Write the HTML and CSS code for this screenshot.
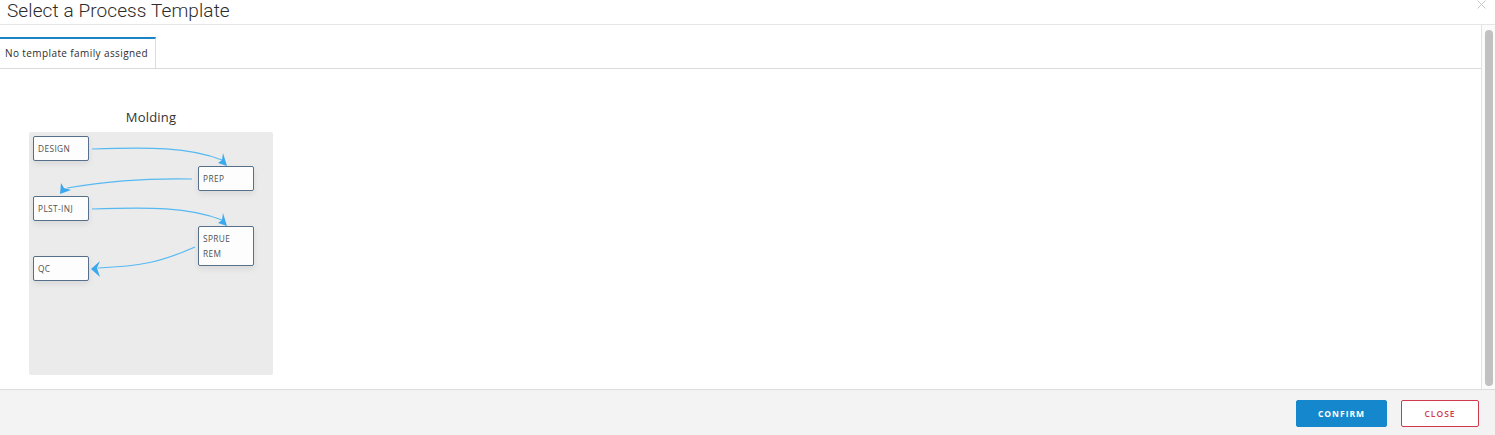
FILE: index.html
```html
<!DOCTYPE html>
<html>
<head>
<meta charset="utf-8">
<link rel="stylesheet" href="styles.css">
</head>
<body>
<div class="dialog">
  <div class="header">
    <div class="title">Select a Process Template</div>
    <div class="close-x">
      <svg width="9" height="9" viewBox="0 0 9 9"><path d="M0.5 0.5 L8.5 8.5 M8.5 0.5 L0.5 8.5" stroke="#c8c8c8" stroke-width="1" fill="none"/></svg>
    </div>
  </div>
  <div class="main">
    <div class="content">
      <div class="tabbar">
        <div class="tab">No template family assigned</div>
      </div>
      <div class="cards">
        <div class="card">
          <div class="card-title">Molding</div>
          <div class="diagram">
            <svg class="arrows" width="244" height="243" viewBox="0 0 244 243">
              <g fill="none" stroke="#56b9f2" stroke-width="1.2">
                <path d="M63 17 C 120 15, 160 15, 193 28"/>
                <path d="M163 47 C 110 46, 75 50, 38 56"/>
                <path d="M63 77 C 120 75, 160 75, 193 88"/>
                <path d="M166 115 C 130 131, 110 134, 69 136"/>
              </g>
              <g fill="#3aa9ee">
                <path d="M198 34 L189 31 L193 28 L194 21 Z"/>
                <path d="M31 62 L32 51 L35 56 L42 58 Z"/>
                <path d="M198 94 L189 91 L193 88 L194 81 Z"/>
                <path d="M62 137 L71 129 L68 136 L71 145 Z"/>
              </g>
            </svg>
            <div class="node n1">DESIGN</div>
            <div class="node n2">PREP</div>
            <div class="node n3">PLST-INJ</div>
            <div class="node n4">SPRUE<br>REM</div>
            <div class="node n5">QC</div>
          </div>
        </div>
      </div>
    </div>
    <div class="scrolltrack"><div class="thumb"></div></div>
  </div>
  <div class="footer">
    <button class="btn confirm">CONFIRM</button>
    <button class="btn cancel">CLOSE</button>
  </div>
</div>
</body>
</html>
```
FILE: styles.css
```css
html, body {
  margin: 0;
  padding: 0;
  background: #ffffff;
}
body {
  font-family: "Open Sans", "Noto Sans", "Liberation Sans", sans-serif;
  color: #3c3c3c;
}
.dialog {
  width: 1495px;
  height: 435px;
  display: flex;
  flex-direction: column;
  overflow: hidden;
}
.header {
  height: 24px;
  border-bottom: 1px solid #e6e6e6;
  display: flex;
  justify-content: space-between;
  align-items: flex-start;
  flex-shrink: 0;
}
.title {
  font-family: Roboto, "Open Sans", sans-serif;
  font-size: 19px;
  font-weight: 300;
  line-height: 22px;
  padding-left: 7px;
  color: #2c2c2c;
  letter-spacing: 0.1px;
}
.close-x {
  margin-right: 9px;
  line-height: 0;
}
.main {
  flex: 1;
  display: flex;
  min-height: 0;
}
.content {
  flex: 1;
  border-right: 1px solid #e2e2e2;
}
.tabbar {
  padding-top: 12px;
  border-bottom: 1px solid #d9d9d9;
  display: flex;
}
.tab {
  height: 29px;
  width: 150px;
  border-top: 2px solid #1a84c6;
  border-right: 1px solid #dcdcdc;
  font-size: 10px;
  line-height: 29px;
  padding-left: 5px;
  color: #2e2e2e;
  letter-spacing: 0.4px;
  white-space: nowrap;
}
.cards {
  padding: 40px 0 0 29px;
  display: flex;
}
.card {
  width: 244px;
  display: flex;
  flex-direction: column;
}
.card-title {
  text-align: center;
  font-size: 13px;
  line-height: 17px;
  margin-bottom: 6px;
  color: #333;
  letter-spacing: 0.2px;
}
.diagram {
  position: relative;
  width: 244px;
  height: 243px;
  background: #ebebeb;
  border-radius: 2px;
}
.arrows {
  position: absolute;
  left: 0;
  top: 0;
}
.node {
  position: absolute;
  box-sizing: border-box;
  width: 56px;
  background: #fdfdfd;
  border: 1px solid #56708c;
  border-radius: 2px;
  box-shadow: 0 3px 6px rgba(0,0,0,0.08);
  font-size: 8.3px;
  line-height: 15px;
  padding: 4px 0 0 4px;
  color: #505050;
  letter-spacing: 0.4px;
}
.n1 { left: 4px; top: 4px; height: 25px; }
.n2 { left: 169px; top: 34px; height: 25px; }
.n3 { left: 4px; top: 64px; height: 25px; }
.n4 { left: 169px; top: 94px; height: 40px; }
.n5 { left: 4px; top: 124px; height: 25px; }
.scrolltrack {
  width: 13px;
  box-sizing: border-box;
  padding: 5px 2px 3px 3px;
  background: #fbfbfb;
  display: flex;
}
.thumb {
  width: 8px;
  flex: 1;
  background: #c1c1c1;
  border-radius: 4px;
}
.footer {
  height: 46px;
  flex-shrink: 0;
  box-sizing: border-box;
  border-top: 1px solid #dcdcdc;
  background: #f3f3f3;
  display: flex;
  justify-content: flex-end;
  align-items: flex-start;
  padding: 10px 16px 0 0;
  gap: 14px;
}
.btn {
  height: 27px;
  font-family: "Open Sans", "Noto Sans", sans-serif;
  font-size: 8.5px;
  font-weight: 700;
  letter-spacing: 1px;
  border-radius: 2px;
  padding: 0;
}
.confirm {
  width: 91px;
  background: #1587cc;
  color: #ffffff;
  border: 1px solid #1587cc;
}
.cancel {
  width: 78px;
  background: #ffffff;
  color: #d0394b;
  border: 1px solid #d0394b;
  font-weight: 600;
}
```
